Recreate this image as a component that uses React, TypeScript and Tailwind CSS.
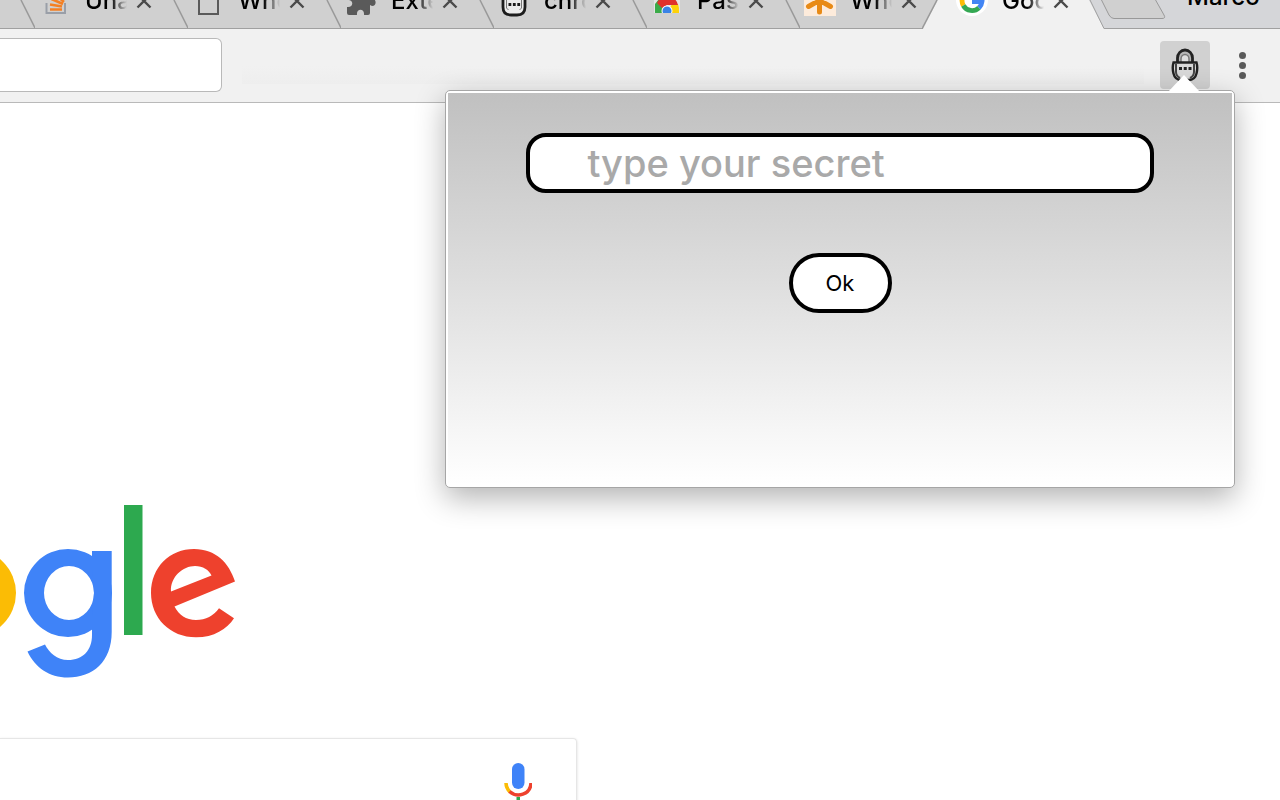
import React from "react";
import clsx from "clsx";

type TabProps = {
  title: string;
  icon: React.ReactNode;
  active?: boolean;
};

const tabs: TabProps[] = [
  { title: "Unable", icon: <StackIcon /> },
  { title: "Where", icon: <PageIcon /> },
  { title: "Extensions", icon: <PuzzleIcon /> },
  { title: "chrome", icon: <PadlockTabIcon /> },
  { title: "Passwords", icon: <WebStoreIcon /> },
  { title: "When", icon: <AsteriskIcon /> },
];

function StackIcon() {
  return (
    <svg viewBox="0 0 32 32" className="h-8 w-8 shrink-0" fill="none">
      <path d="M7.500 19v10h18.500V19" stroke="#9a9fa8" strokeWidth="2" />
      <path
        d="M11 25.500h12M11 20.500l12 2M12.500 15l11.500 5M16 10l9 8M21 5l6 10"
        stroke="#f48024"
        strokeWidth="2.600"
      />
    </svg>
  );
}

function PageIcon() {
  return (
    <svg viewBox="0 0 32 32" className="h-8 w-8 shrink-0" fill="none">
      <path d="M7 2h12l7 7v21H7z" stroke="#5a5a5a" strokeWidth="2" />
    </svg>
  );
}

function PuzzleIcon() {
  return (
    <svg viewBox="0 0 32 32" className="h-8 w-8 shrink-0" fill="#5a5a5a">
      <path d="M2 7h7c-2-6 9-6 7 0h9v8c6-3 8 7 2 7l-2-1v8q0 2-2 2h-4c1-7-8-7-7 0H4q-2 0-2-2v-6c7 1 7-8 0-7z" />
    </svg>
  );
}

function PadlockTabIcon() {
  return (
    <svg viewBox="0 0 32 33" className="h-[33px] w-8 shrink-0" fill="none">
      <path
        d="M5 12V9a11 8 0 0 1 22 0v3"
        stroke="#1c1c1c"
        strokeWidth="3"
      />
      <path
        d="M5 12h22v11q0 8-8 8h-6q-8 0-8-8z"
        fill="#ececec"
        stroke="#1c1c1c"
        strokeWidth="2.800"
      />
      <path d="M8.500 15v9l2 2M23.500 15v9l-2 2" stroke="#777" />
      <path d="M10.500 20.500h12" stroke="#1c1c1c" strokeWidth="2.800" strokeDasharray="2.800 1.600" />
    </svg>
  );
}

function WebStoreIcon() {
  return (
    <svg viewBox="0 0 32 32" className="h-8 w-8 shrink-0">
      <path d="M3 2h26v27H3z" fill="#e4e4e4" />
      <path d="M4 29V20L8 15l8 14z" fill="#3bab49" />
      <path d="M16 29l5-9h6q1.500 4 1 9z" fill="#fdd20a" />
      <path d="M6 19a11 11 0 0 1 21 2H16l-5 3z" fill="#e0322c" />
      <circle cx="16" cy="27" r="5.500" fill="#fff" />
      <circle cx="16" cy="27" r="4.500" fill="#3a83e6" />
      <path d="M3 29h26v3H3z" fill="#d0d0d0" />
    </svg>
  );
}

function AsteriskIcon() {
  return (
    <svg viewBox="0 0 32 32" className="h-8 w-8 shrink-0">
      <path d="M0 0h32v32H0z" fill="#fdebdb" />
      <path
        d="M15.500 3v25M4.500 10l22 12.500M26.500 10l-22 12.500"
        stroke="#e88a16"
        strokeWidth="5"
        strokeLinecap="round"
      />
    </svg>
  );
}

function GoogleIcon() {
  return (
    <svg viewBox="0 0 32 32" className="h-8 w-8 shrink-0" fill="none">
      <circle cx="16" cy="16" r="16" fill="#fff" />
      <g strokeWidth="4.800">
        <path d="M23.500 9A10 10 0 0 0 6.800 13" stroke="#ea4335" />
        <path d="M6.800 13a10 10 0 0 0 0.500 8.500" stroke="#fbbc05" />
        <path d="M7.300 21.500a10 10 0 0 0 15.700 2.200" stroke="#34a853" />
        <path d="M16 17.500h10a10 10 0 0 1-3 6.200" stroke="#4285f4" />
      </g>
    </svg>
  );
}

function Tab({ title, icon, active }: TabProps) {
  return (
    <div className={clsx("flex shrink-0", active && "-ml-[15px]")}>
      <svg viewBox="0 0 16 29" className="h-[29px] w-4 shrink-0" fill="none">
        {active ? (
          <>
            <path d="M0 29L16 0V29z" fill="#f1f1f1" />
            <path d="M0 29L15 0" stroke="#999" strokeWidth="1.500" />
          </>
        ) : (
          <path d="M2 0L16 28" stroke="#999" strokeWidth="1.500" />
        )}
      </svg>
      <div
        className={clsx(
          "flex h-[29px] items-end pr-5",
          active ? "bg-[#f1f1f1] pl-[18px]" : "pl-1",
        )}
      >
        <div className="flex h-[45px] items-start">
          {icon}
          <span className="ml-3.5 h-[34px] w-[42px] overflow-hidden bg-gradient-to-r from-black from-60% to-transparent bg-clip-text text-2xl leading-[34px] font-medium text-transparent">
            {title}
          </span>
          <button type="button" aria-label={`Close ${title}`} className="ml-[9px] pt-[9px]">
            <svg viewBox="0 0 16 16" className="h-4 w-4" fill="none">
              <path
                d="M1.500 1.500l13 13M14.500 1.500l-13 13"
                stroke="#4a4a4a"
                strokeWidth="2.400"
              />
            </svg>
          </button>
        </div>
      </div>
    </div>
  );
}

function TabStrip() {
  return (
    <div className="flex h-[29px] shrink-0 overflow-hidden bg-[#d5d6d9]">
      <div className="flex h-[29px] shrink-0 border-b border-[#a0a0a0] bg-[#d0d0d0] pl-[19px]">
        {tabs.map((tab) => (
          <Tab key={tab.title} {...tab} />
        ))}
      </div>
      <Tab title="Google" icon={<GoogleIcon />} active />
      <svg viewBox="0 0 78 29" className="h-[29px] w-[78px] shrink-0" fill="none">
        <path d="M0 0L15 29H0z" fill="#f1f1f1" />
        <path d="M1 0L15 28.500H78" stroke="#a0a0a0" />
        <path
          d="M12 -1L20 15Q22 18.500 25 18.500H73Q77 18.500 75 15L66 -1"
          fill="#d0d0d0"
          stroke="#999"
        />
      </svg>
      <div className="flex flex-1 items-end border-b border-[#a0a0a0] pl-5">
        <button type="button" className="flex h-12 items-start text-2xl leading-[34px] font-medium text-black">
          Marco
        </button>
      </div>
    </div>
  );
}

function PadlockIcon() {
  return (
    <svg viewBox="0 0 28 36" className="h-9 w-7" fill="none">
      <path d="M6.500 16v-5a7.500 8 0 0 1 15 0v5" fill="#b5b5b5" stroke="#222" strokeWidth="2.800" />
      <path d="M10 15v-3a4 4.500 0 0 1 8 0v3" fill="#dedede" stroke="#777" strokeWidth="1.500" />
      <path
        d="M2.500 15.500h23q1.500 5 0 11q-1.500 6.500-8 6.500h-7q-6.500 0-8-6.500q-1.500-6 0-11z"
        fill="#d8d8d8"
        stroke="#222"
        strokeWidth="2.400"
      />
      <path d="M5 17v8q0 4 4 6M23 17v8q0 4-4 6" stroke="#444" strokeWidth="2" />
      <path d="M8 21.500h12.500" stroke="#222" strokeWidth="3" strokeDasharray="3 1.750" />
    </svg>
  );
}

function Toolbar() {
  return (
    <div className="flex h-[74px] shrink-0 items-start border-b border-[#b9b9b9] bg-[#f1f1f1] pt-[9px]">
      <input
        type="text"
        aria-label="Address"
        className="h-[54px] w-[222px] rounded-r-md border border-l-0 border-[#b9b9b9] bg-white outline-none"
      />
      <div className="mr-4 ml-5 h-[46px] flex-1 bg-gradient-to-b from-[#f1f1f1] from-60% to-[#eeeeee]" />
      <button
        type="button"
        aria-label="Extension"
        className="mt-[3px] flex h-12 w-[50px] items-center justify-center rounded-sm bg-[#d1d1d1]"
      >
        <PadlockIcon />
      </button>
      <button type="button" aria-label="Menu" className="mt-3.5 mr-[34px] ml-[29px] flex flex-col gap-[3px]">
        <span className="h-[7px] w-[7px] rounded-full bg-[#5a5a5a]" />
        <span className="h-[7px] w-[7px] rounded-full bg-[#5a5a5a]" />
        <span className="h-[7px] w-[7px] rounded-full bg-[#5a5a5a]" />
      </button>
    </div>
  );
}

function Popup() {
  return (
    <div className="absolute top-[90px] right-[45px] w-[790px] rounded-[5px] border border-[#a6a6a6] bg-white p-0.5 shadow-[0_10px_30px_rgba(0,0,0,0.3)]">
      <svg viewBox="0 0 32 17" className="absolute -top-4 right-[34px] h-[17px] w-8">
        <path d="M0 17L16 0L32 17z" fill="#fff" />
      </svg>
      <form
        onSubmit={(e) => e.preventDefault()}
        className="flex h-[392px] flex-col items-center gap-[60px] bg-gradient-to-b from-[#c0c0c0] to-white pt-10"
      >
        <input
          type="text"
          aria-label="Secret"
          placeholder="type your secret"
          className="h-[60px] w-4/5 rounded-[20px] border-4 border-black bg-white pl-[57px] text-[38px] font-medium outline-none placeholder:text-[#a9a9a9]"
        />
        <button
          type="submit"
          className="h-[60px] w-[103px] rounded-full border-4 border-black bg-white text-[22px] text-black"
        >
          Ok
        </button>
      </form>
    </div>
  );
}

function GoogleLogo() {
  return (
    <svg
      viewBox="0 504 240 174"
      className="h-[174px] w-60 shrink-0"
      fillRule="evenodd"
      role="img"
      aria-label="Google"
    >
      <circle cx="-28" cy="593" r="44" fill="#fbbc05" />
      <g fill="#3f83f8">
        <path d="M24 593a44 44 0 1 1 88 0a44 44 0 1 1-88 0zM44 593a25 27 0 1 0 50 0a25 27 0 1 0-50 0z" />
        <path d="M92 551h19.700v81c0 30-19 45.500-43.700 45.500c-19 0-33-10-40.500-26l17.500-7c4 8 12 15.500 23 15.500c15 0 24-10 24-25v-19l2-23l-2-23z" />
      </g>
      <path d="M124 505h18.500v130H124z" fill="#2da94f" />
      <path
        d="M235 581.500L174.500 606.500C179 615 186 620 196 620C206 620 213.500 616 219 608.300L234 618.200C227 629 214 637.300 196 637.300C170 637.300 151 618 151 593C151 567 170 549 194 549C216 549 229 563 235 581.500zM171 591.500L211.500 575.500C209 570 203 566 195 566C183 566 170 577 171 591.500z"
        fill="#ee412d"
      />
    </svg>
  );
}

function MicIcon() {
  return (
    <svg viewBox="0 0 28 40" className="h-10 w-7" fill="none">
      <rect x="8" y="0" width="12.500" height="26" rx="6.250" fill="#3f83f8" />
      <path d="M2 20q0 5 4 9" stroke="#fbbc05" strokeWidth="3.500" />
      <path d="M5.500 28.500C13 35 26.500 32 27 20" stroke="#ee412d" strokeWidth="3.500" />
      <path d="M14.250 34v6" stroke="#2da94f" strokeWidth="3.500" />
    </svg>
  );
}

export default function App() {
  return (
    <div className="relative flex h-screen flex-col overflow-hidden bg-white font-[Inter,'Liberation_Sans',sans-serif]">
      <TabStrip />
      <Toolbar />
      <main className="flex flex-col items-start gap-[60px] pt-[401px]">
        <GoogleLogo />
        <div className="flex h-[88px] w-[577px] shrink-0 items-center rounded-r-sm border-t border-r border-[#e6e6e6] pr-11 shadow-[0_1px_3px_rgba(0,0,0,0.15)]">
          <input type="search" aria-label="Search" className="h-full flex-1 outline-none" />
          <button type="button" aria-label="Search by voice">
            <MicIcon />
          </button>
        </div>
      </main>
      <Popup />
    </div>
  );
}
